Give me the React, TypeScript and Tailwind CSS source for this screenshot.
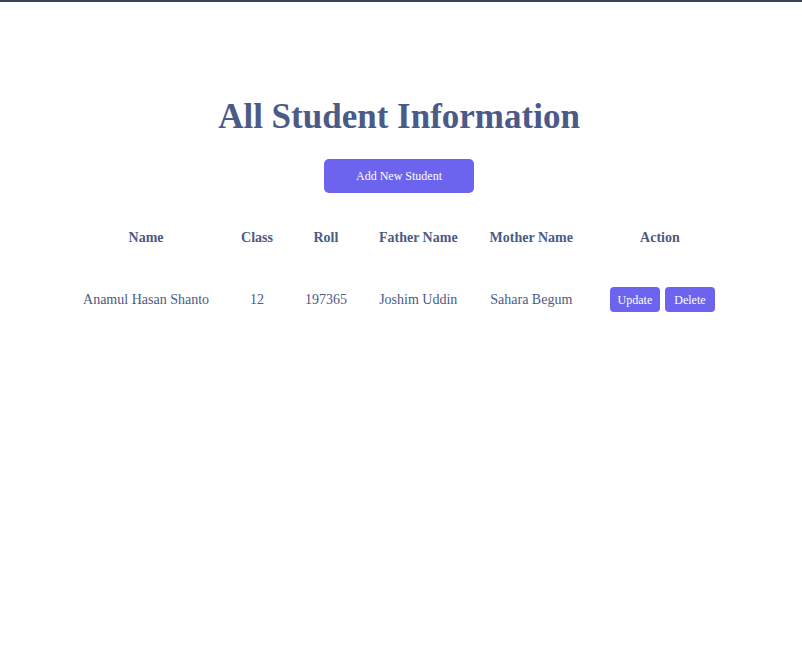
import React from "react";

const rows = [
  { name: "Anamul Hasan Shanto", cls: "12", roll: "197365", father: "Joshim Uddin", mother: "Sahara Begum" },
];

export default function App() {
  return (
    <div className="min-h-screen bg-white border-t-2 border-[#374151]" style={{ fontFamily: '"Liberation Serif", serif' }}>
      <div className="pt-[95px] pr-[4px] flex flex-col items-center text-[#4b5a86]">
        <h1 className="text-[35px] leading-[40px] font-bold">All Student Information</h1>
        <button className="mt-[22px] w-[150px] h-[34px] rounded-[5px] bg-[#6c63ef] text-white text-[12px]">Add New Student</button>
        <table className="mt-[24px] text-[14px]">
          <thead>
            <tr>
              <th className="px-4 h-[40px] font-bold">Name</th>
              <th className="px-4 h-[40px] font-bold">Class</th>
              <th className="px-4 h-[40px] font-bold">Roll</th>
              <th className="px-4 h-[40px] font-bold">Father Name</th>
              <th className="px-4 h-[40px] font-bold">Mother Name</th>
              <th className="px-4 h-[40px] font-bold w-[142px]">Action</th>
            </tr>
          </thead>
          <tbody>
            {rows.map((r) => (
              <tr key={r.roll}>
                <td className="px-4 pt-[30px] pb-2 text-center">{r.name}</td>
                <td className="px-4 pt-[30px] pb-2 text-center">{r.cls}</td>
                <td className="px-4 pt-[30px] pb-2 text-center">{r.roll}</td>
                <td className="px-4 pt-[30px] pb-2 text-center">{r.father}</td>
                <td className="px-4 pt-[30px] pb-2 text-center">{r.mother}</td>
                <td className="px-4 pt-[30px] pb-2">
                  <div className="flex justify-start gap-[5px] pl-[5px]">
                    <button className="w-[50px] h-[25px] rounded-[4px] bg-[#6c63ef] text-white text-[12px]">Update</button>
                    <button className="w-[50px] h-[25px] rounded-[4px] bg-[#6c63ef] text-white text-[12px]">Delete</button>
                  </div>
                </td>
              </tr>
            ))}
          </tbody>
        </table>
      </div>
    </div>
  );
}
